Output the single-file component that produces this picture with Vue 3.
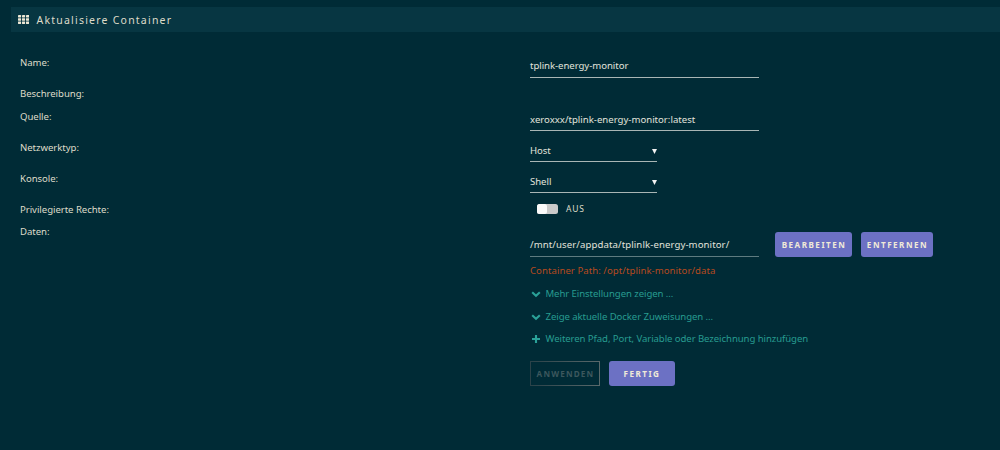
<script setup>
const links = [
  { text: 'Mehr Einstellungen zeigen ...', icon: 'chevron' },
  { text: 'Zeige aktuelle Docker Zuweisungen ...', icon: 'chevron' },
  { text: 'Weiteren Pfad, Port, Variable oder Bezeichnung hinzufügen', icon: 'plus' },
]
</script>

<template>
  <main class="page">
    <header class="title">
      <svg class="grid-icon" viewBox="0 0 11 9">
        <g v-for="r in 3" :key="r">
          <rect v-for="c in 3" :key="c" :x="(c - 1) * 4" :y="(r - 1) * 3.2" width="3.1" height="2.5" rx=".4" />
        </g>
      </svg>
      <span>Aktualisiere Container</span>
    </header>

    <section class="form">
      <div class="row r-name">
        <label>Name:</label>
        <div class="field">tplink-energy-monitor</div>
      </div>
      <div class="row r-desc"><label>Beschreibung:</label></div>
      <div class="row r-src">
        <label>Quelle:</label>
        <div class="field">xeroxxx/tplink-energy-monitor:latest</div>
      </div>
      <div class="row r-net">
        <label>Netzwerktyp:</label>
        <div class="field select"><span>Host</span><svg viewBox="0 0 5 5"><path d="M0 0h5L2.5 5z" /></svg></div>
      </div>
      <div class="row r-con">
        <label>Konsole:</label>
        <div class="field select"><span>Shell</span><svg viewBox="0 0 5 5"><path d="M0 0h5L2.5 5z" /></svg></div>
      </div>
      <div class="row r-priv">
        <label>Privilegierte Rechte:</label>
        <div class="toggle"><i class="switch"><b></b></i><span>AUS</span></div>
      </div>
      <div class="row r-data">
        <label>Daten:</label>
        <div class="data">
          <div class="field">/mnt/user/appdata/tplinlk-energy-monitor/</div>
          <button class="btn edit">BEARBEITEN</button>
          <button class="btn remove">ENTFERNEN</button>
        </div>
      </div>
    </section>

    <section class="extra">
      <p class="path">Container Path: /opt/tplink-monitor/data</p>
      <a v-for="l in links" :key="l.text" class="link">
        <svg viewBox="0 0 10 10">
          <path v-if="l.icon === 'chevron'" d="M1.2 3.2 5 6.8 8.8 3.2" />
          <path v-else d="M5 1v8M1 5h8" />
        </svg>
        <span>{{ l.text }}</span>
      </a>
      <div class="actions">
        <button class="btn apply" disabled>ANWENDEN</button>
        <button class="btn done">FERTIG</button>
      </div>
    </section>
  </main>
</template>

<style>
body { margin: 0; background: #002b36; }
</style>

<style scoped>
.page {
  height: 450px;
  box-sizing: border-box;
  padding-top: 7px;
  overflow: hidden;
  background: #002b36;
  color: #dedbc9;
  font: 9.6px/20px "Noto Sans", "Open Sans", sans-serif;
  letter-spacing: -0.05px;
}
.title {
  display: flex;
  align-items: center;
  height: 25px;
  margin-left: 11px;
  padding-left: 7px;
  background: #073642;
  font-size: 10.5px;
  letter-spacing: 1.22px;
}
.grid-icon { width: 11px; height: 9px; margin-right: 7.5px; fill: #eee8d5; }
.form { padding: 20px 0 0 20px; }
.row { display: grid; grid-template-columns: 510px 1fr; align-items: start; }
.r-name { height: 31px; }
.r-desc { height: 23px; }
.r-src { height: 31px; }
.r-net { height: 31px; }
.r-con { height: 32px; }
.r-priv { height: 22px; }
.r-data { height: 39px; }
label { padding-top: 1px; }
.r-priv label, .r-data label { padding-top: 0; }
.field {
  box-sizing: border-box;
  width: 229px;
  height: 26px;
  padding-top: 4px;
  border-bottom: 1px solid #a9b6b5;
  color: #e2e3dc;
  white-space: nowrap;
}
.r-src .field, .r-net .field, .r-con .field { height: 25px; }
.r-src .field { letter-spacing: 0; }
.select { display: flex; justify-content: space-between; width: 127px; }
.select svg { width: 5px; height: 5px; margin: 8px 0 0; fill: #f2f2f2; }
.toggle { display: flex; align-items: center; height: 18px; padding-left: 7px; letter-spacing: 0.8px; font-size: 8.5px; }
.switch { width: 21px; height: 9.5px; margin-right: 8px; border-radius: 2.5px; background: #c9c9c9; }
.switch b { display: block; width: 10px; height: 9.5px; border-radius: 2.5px; background: #fafafa; }
.data { display: flex; align-items: flex-start; padding-top: 10px; }
.data .field { height: 25px; padding-top: 3px; border-color: #5e7b80; letter-spacing: 0.1px; }
.btn {
  box-sizing: border-box;
  height: 25px;
  padding: 0 0 0 1px;
  border: 0;
  border-radius: 3px;
  background: #6c71c4;
  color: #f0ead8;
  font: bold 8.1px/25px "Noto Sans", "Open Sans", sans-serif;
  letter-spacing: 1.5px;
  white-space: nowrap;
}
.edit { width: 77px; margin-left: 16px; }
.remove { width: 72px; margin-left: 9px; }
.extra { padding-left: 530px; }
.path { margin: 0; height: 22px; color: #b64a1e; letter-spacing: 0.05px; }
.link { display: flex; align-items: center; height: 22.5px; color: #279b90; letter-spacing: -0.08px; white-space: nowrap; }
.link svg { width: 10px; height: 10px; margin: 0 4.5px 0 1px; fill: none; stroke: #2aa198; stroke-width: 2.1; }
.actions { display: flex; padding-top: 10px; }
.apply {
  width: 70px;
  border: 1px solid;
  border-image: linear-gradient(90deg, #2a4249, #5a696b) 1;
  background: transparent;
  color: #3c575d;
  line-height: 23px;
  letter-spacing: 1.2px;
}
.done { width: 66px; margin-left: 8.5px; }
</style>
